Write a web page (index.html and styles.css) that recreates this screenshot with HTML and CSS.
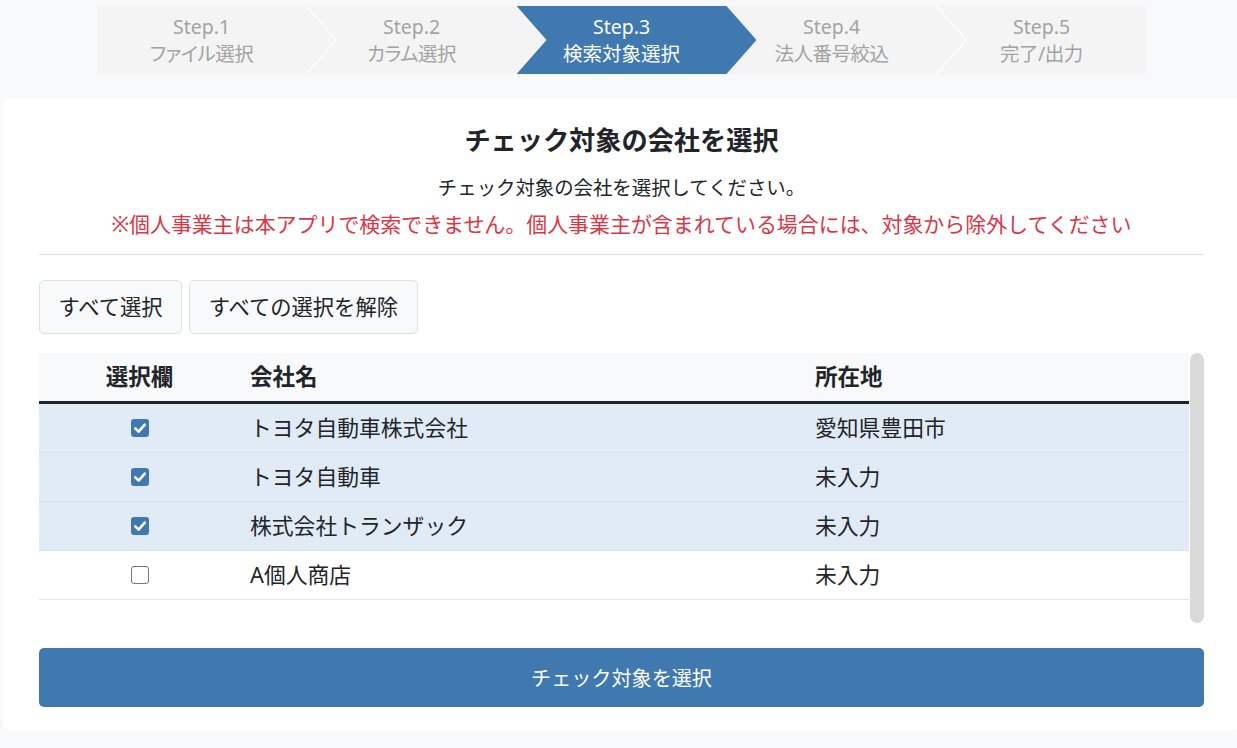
FILE: index.html
```html
<!DOCTYPE html>
<html lang="ja">
<head>
<meta charset="utf-8">
<title>チェック対象の会社を選択</title>
<link rel="stylesheet" href="styles.css">
</head>
<body>
<div class="page">
  <ol class="stepper">
    <li class="step"><span class="step-no">Step.1</span><span class="step-name">ファイル選択</span></li>
    <li class="step"><span class="step-no">Step.2</span><span class="step-name">カラム選択</span></li>
    <li class="step active"><span class="step-no">Step.3</span><span class="step-name">検索対象選択</span></li>
    <li class="step"><span class="step-no">Step.4</span><span class="step-name">法人番号絞込</span></li>
    <li class="step last"><span class="step-no">Step.5</span><span class="step-name">完了/出力</span></li>
  </ol>

  <section class="card">
    <h2 class="title">チェック対象の会社を選択</h2>
    <p class="lead">チェック対象の会社を選択してください。</p>
    <p class="warn">※個人事業主は本アプリで検索できません。個人事業主が含まれている場合には、対象から除外してください</p>
    <hr class="divider">

    <div class="actions">
      <button class="btn-light" type="button">すべて選択</button>
      <button class="btn-light" type="button">すべての選択を解除</button>
    </div>

    <div class="table-wrap">
      <div class="table-scroll">
        <table class="company-table">
          <thead>
            <tr>
              <th class="col-check">選択欄</th>
              <th class="col-name">会社名</th>
              <th class="col-addr">所在地</th>
            </tr>
          </thead>
          <tbody>
            <tr class="selected">
              <td class="col-check"><span class="cb checked"><svg viewBox="0 0 18 18" width="18" height="18"><path d="M4.3 9.4 L7.6 12.6 L13.8 5.6" fill="none" stroke="#fff" stroke-width="2.6" stroke-linecap="round" stroke-linejoin="round"/></svg></span></td>
              <td>トヨタ自動車株式会社</td>
              <td>愛知県豊田市</td>
            </tr>
            <tr class="selected">
              <td class="col-check"><span class="cb checked"><svg viewBox="0 0 18 18" width="18" height="18"><path d="M4.3 9.4 L7.6 12.6 L13.8 5.6" fill="none" stroke="#fff" stroke-width="2.6" stroke-linecap="round" stroke-linejoin="round"/></svg></span></td>
              <td>トヨタ自動車</td>
              <td>未入力</td>
            </tr>
            <tr class="selected">
              <td class="col-check"><span class="cb checked"><svg viewBox="0 0 18 18" width="18" height="18"><path d="M4.3 9.4 L7.6 12.6 L13.8 5.6" fill="none" stroke="#fff" stroke-width="2.6" stroke-linecap="round" stroke-linejoin="round"/></svg></span></td>
              <td>株式会社トランザック</td>
              <td>未入力</td>
            </tr>
            <tr>
              <td class="col-check"><span class="cb"></span></td>
              <td>A個人商店</td>
              <td>未入力</td>
            </tr>
          </tbody>
        </table>
      </div>
      <div class="scrollbar"></div>
    </div>

    <button class="btn-primary" type="button">チェック対象を選択</button>
  </section>
</div>
</body>
</html>
```

FILE: styles.css
```css
html, body {
  margin: 0;
  padding: 0;
  overflow: hidden;
  background: #f8f9fa;
}

body {
  font-family: "Noto Sans", "Noto Sans CJK JP", sans-serif;
  color: #212529;
  width: 1237px;
  height: 748px;
}

.page {
  width: 1237px;
  padding: 6px 0 0 3px;
  box-sizing: content-box;
}

/* ---------- stepper ---------- */
.stepper {
  list-style: none;
  margin: 0 auto;
  padding: 0;
  width: 1050px;
  height: 68px;
  display: flex;
  background: #f4f4f4;
  position: relative;
}

.step {
  position: relative;
  flex: 0 0 210px;
  display: flex;
  flex-direction: column;
  align-items: center;
  justify-content: center;
  color: #a3a3a3;
  font-size: 19.5px;
  line-height: 27px;
  font-feature-settings: "palt";
}

.step-name {
  letter-spacing: -0.5px;
}

.step-no, .step-name {
  position: relative;
  z-index: 2;
}

.step::after {
  content: "";
  position: absolute;
  top: 0;
  left: 209px;
  width: 32px;
  height: 100%;
  background: #ffffff;
  clip-path: polygon(0 0, 1.6px 0, 31.6px 50%, 1.6px 100%, 0 100%, 30px 50%);
  z-index: 1;
}

.step.last::after,
.step.active::after {
  display: none;
}

.step.active {
  color: #ffffff;
}

.step.active .step-name {
  letter-spacing: 0;
}

.step.active::before {
  content: "";
  position: absolute;
  top: 0;
  left: 0;
  width: 240px;
  height: 100%;
  background: #4079b0;
  clip-path: polygon(0 0, 210px 0, 240px 50%, 210px 100%, 0 100%, 30px 50%);
  z-index: 1;
}

/* ---------- card ---------- */
.card {
  margin-top: 24px;
  background: #ffffff;
  border-radius: 6px;
  padding: 24px 36px 23px 36px;
  width: 1165px;
}

.title {
  margin: 0;
  text-align: center;
  font-size: 26.2px;
  font-weight: 700;
  line-height: 36px;
}

.lead {
  margin: 12px 0 0;
  text-align: center;
  font-size: 19.4px;
  line-height: 36px;
}

.warn {
  margin: 0;
  text-align: center;
  font-size: 20.95px;
  line-height: 36px;
  color: #dc3545;
}

.divider {
  margin: 12px 0 0;
  border: 0;
  border-top: 1px solid #dee2e6;
  height: 0;
}

/* ---------- buttons ---------- */
.actions {
  margin-top: 25px;
  display: flex;
  gap: 7px;
}

.btn-light {
  font-family: inherit;
  font-size: 21.3px;
  line-height: 30px;
  color: #212529;
  background: #f8f9fa;
  border: 1px solid #dee2e6;
  border-radius: 5px;
  padding: 11px 18.5px;
  height: 54px;
}

/* ---------- table ---------- */
.table-wrap {
  margin-top: 19px;
  display: flex;
  height: 270px;
}

.table-scroll {
  flex: 1;
  overflow: hidden;
}

.scrollbar {
  flex: 0 0 14px;
  margin-left: 1px;
  background: #dadada;
  border-radius: 7px;
}

.company-table {
  width: 100%;
  border-collapse: collapse;
  table-layout: fixed;
  font-size: 21.8px;
}

.company-table th,
.company-table td {
  padding: 10px 10px;
  line-height: 28px;
  height: 28px;
  text-align: left;
  border-bottom: 1px solid #dee2e6;
}

.company-table th {
  background: #f8f9fa;
  font-weight: 700;
  font-size: 22.5px;
  border-bottom: 3px solid #212529;
}

.company-table .col-check {
  width: 181px;
  text-align: center;
}

.company-table .col-name {
  width: 545px;
}

.company-table tr.selected td {
  background: #e1ebf5;
}

.cb {
  display: inline-block;
  width: 18px;
  height: 18px;
  box-sizing: border-box;
  border: 1.5px solid #777777;
  border-radius: 3px;
  background: #ffffff;
  vertical-align: middle;
  position: relative;
  top: -2px;
}

.cb.checked {
  border: 0;
  background: #4079b0;
}

.cb svg {
  display: block;
}

/* ---------- primary ---------- */
.btn-primary {
  margin-top: 25px;
  display: block;
  width: 100%;
  height: 59px;
  font-family: inherit;
  font-size: 20.1px;
  color: #ffffff;
  background: #4079b0;
  border: 0;
  border-radius: 5px;
}
```
